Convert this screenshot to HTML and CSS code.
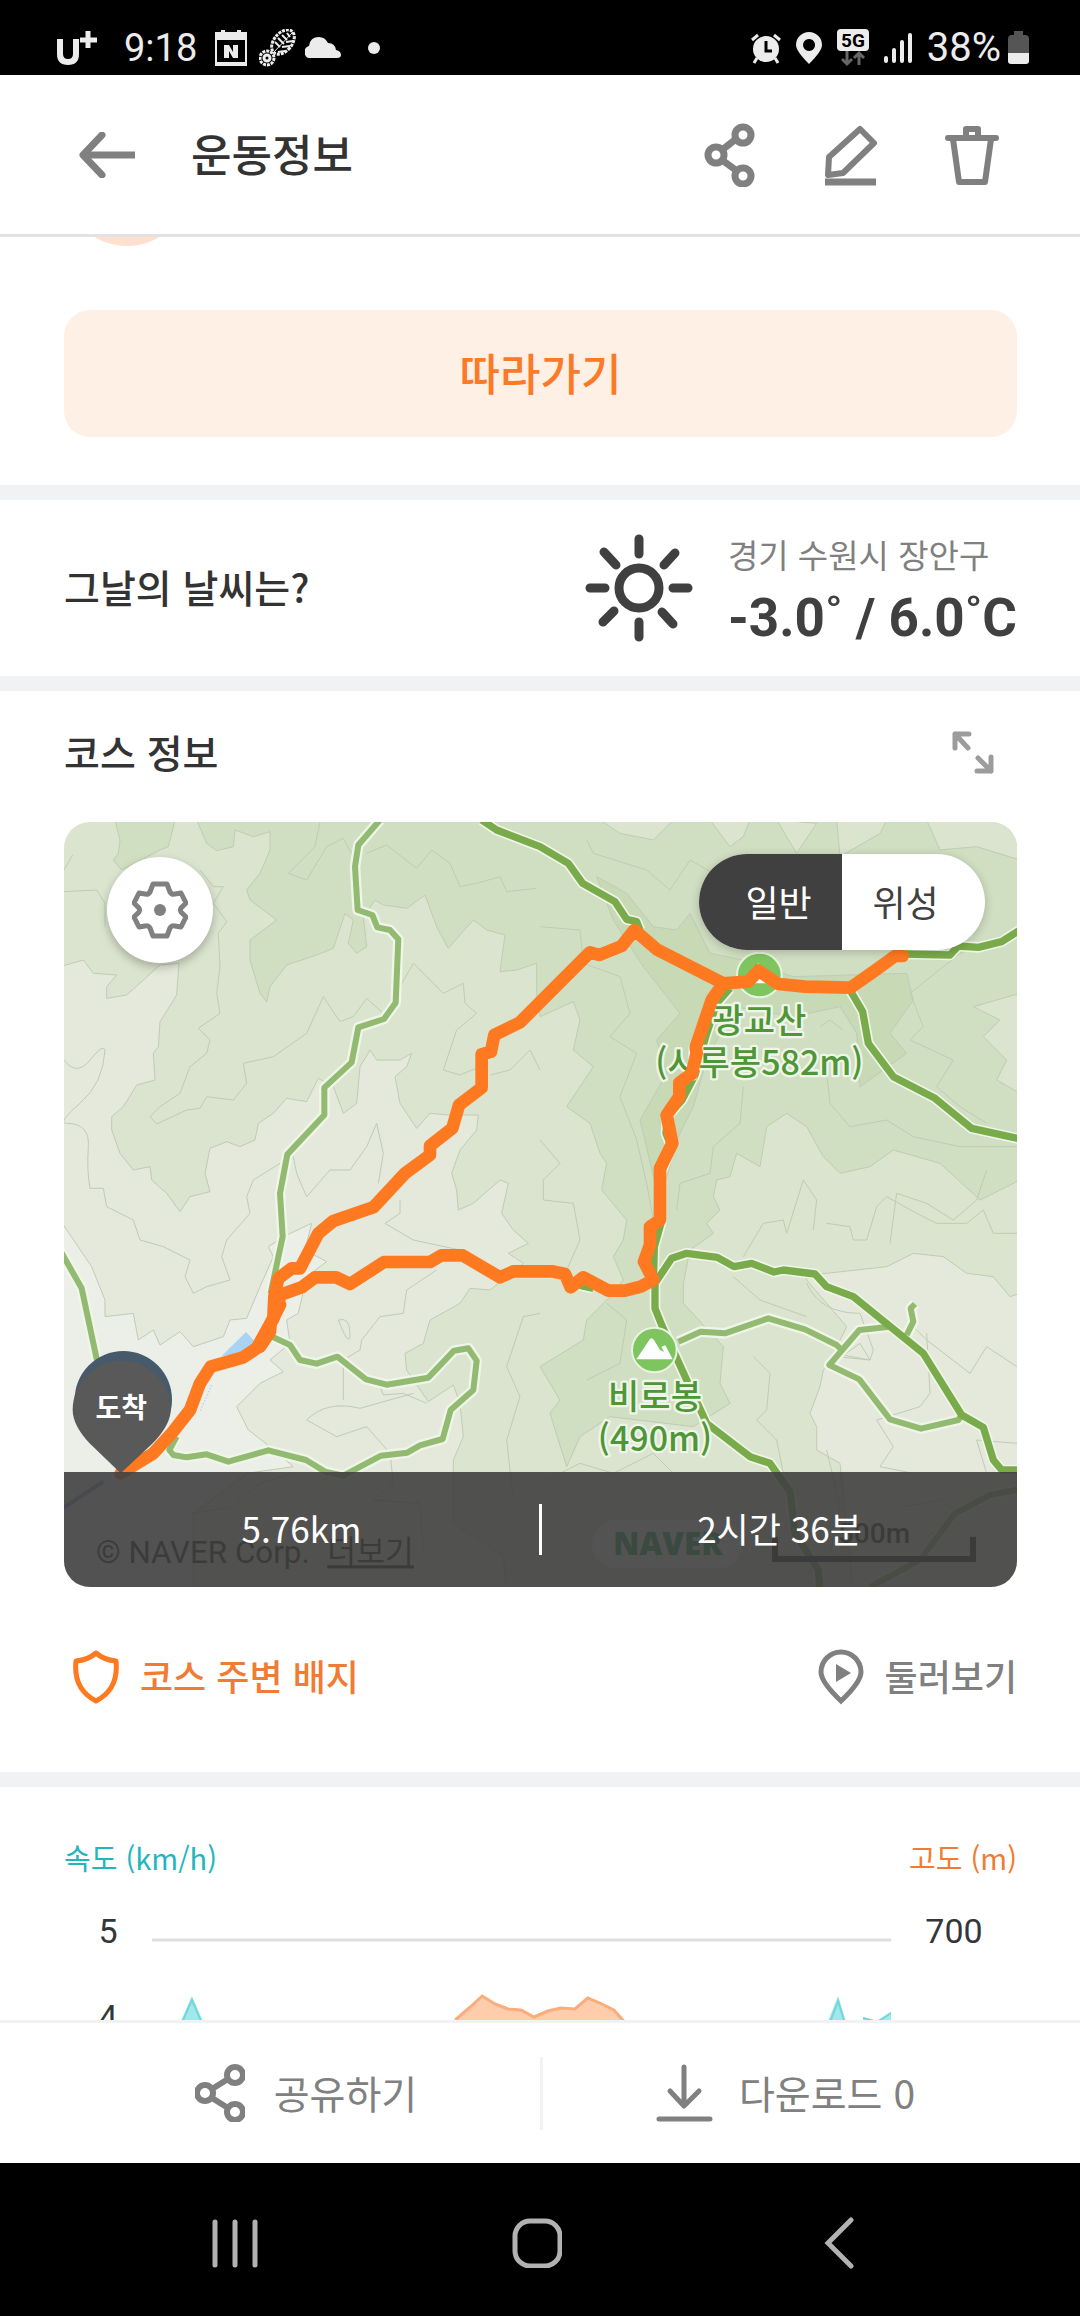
FILE: index.html
```
<!DOCTYPE html>
<html lang="ko">
<head>
  <meta charset="UTF-8" />
  <meta name="viewport" content="width=device-width, initial-scale=1" />
  <title>운동정보</title>
  <link rel="stylesheet" href="styles.css">
</head>
<body>
  <div class="status-bar">
    <div class="status-left">
      <svg width="42" height="34" viewBox="0 0 42 34" fill="none" stroke="#ececec">
        <path d="M4 8v15q0 8 8 8t8-8V8" stroke-width="6"/>
        <path d="M32 0v17M24 9h17" stroke-width="5"/>
      </svg>
      <span class="clock">9:18</span>
      <svg width="32" height="36" viewBox="0 0 32 36">
        <path d="M0 2h6V0h4v2h12V0h4v2h6v34H0zM2 10v22h28V10z" fill="#ececec" fill-rule="evenodd"/>
        <path d="M9 28V15h5l4 7v-7h5v13h-5l-4-7v7z" fill="#ececec"/>
      </svg>
      <svg class="leaf" width="38" height="38" viewBox="0 0 38 38" fill="none" stroke="#ececec">
        <ellipse cx="24" cy="13" rx="9" ry="14" transform="rotate(40 24 13)" stroke-width="3" stroke-dasharray="3 1"/>
        <path d="M14 24L34 3" stroke-width="1"/>
        <path d="M16 13l5 5M19 9l6 6M23 6l5 5M28 4l3 4M19 23l7-1M23 18l8-1M27 13l7-1" stroke-width="2"/>
        <circle cx="8" cy="29" r="7" stroke-width="3" stroke-dasharray="3 1"/>
        <circle cx="8" cy="29" r="3" stroke-width="3"/>
      </svg>
      <svg class="cloud" width="36" height="21" viewBox="0 0 36 21" fill="#ececec">
        <path d="M5 21a5 6 0 0 1-1-12Q5 0 14 0q6 0 9 6 7 0 8 7 5 1 5 5 0 3-4 3z"/>
      </svg>
      <i class="dot"></i>
    </div>
    <div class="status-right">
      <svg width="30" height="32" viewBox="0 0 30 32">
        <path d="M1 8l6-5M29 8l-6-5M6 26l-3 5M24 26l3 5" stroke="#ececec" stroke-width="3"/>
        <circle cx="15" cy="17" r="13" fill="#ececec"/>
        <path d="M15 9v10h6" fill="none" stroke="#000" stroke-width="3"/>
      </svg>
      <svg width="26" height="32" viewBox="0 0 26 32">
        <path d="M13 32Q0 19 0 13a13 13 0 0 1 26 0q0 6-13 19zM13 7a6 6 0 1 0 .1 0z" fill="#ececec" fill-rule="evenodd"/>
      </svg>
      <svg width="32" height="38" viewBox="0 0 32 38">
        <rect width="32" height="22" rx="4" fill="#ececec"/>
        <text class="net" x="16" y="18" text-anchor="middle">5G</text>
        <path d="M10 22v13M5 30l5 5 5-5M22 36V24M17 29l5-5 5 5" fill="none" stroke="#666" stroke-width="3"/>
      </svg>
      <svg width="28" height="30" viewBox="0 0 28 30" stroke="#ececec" stroke-width="4" stroke-linecap="round">
        <path d="M2 25v3M10 17v11M18 9v19M26 2v26"/>
      </svg>
      <span class="battery-text">38%</span>
      <svg width="21" height="34" viewBox="0 0 21 34">
        <path d="M6 0h9v4h2q4 0 4 4v14H0V8q0-4 4-4h2z" fill="#555"/>
        <path d="M0 22h21v8q0 3-3 3H3q-3 0-3-3z" fill="#ececec"/>
      </svg>
    </div>
  </div>

  <header class="header">
    <button type="button" class="icon-btn" aria-label="뒤로">
      <svg width="56" height="46" viewBox="0 0 56 46" fill="none" stroke="#808080" stroke-width="7">
        <path d="M4 23h52"/><path d="M23 3L4 23l19 20" stroke-linecap="round" stroke-linejoin="round"/>
      </svg>
    </button>
    <h1>운동정보</h1>
    <div class="header-actions">
      <button type="button" class="icon-btn" aria-label="공유">
        <svg width="60" height="64" viewBox="0 0 60 64" fill="none" stroke="#808080" stroke-width="7">
          <circle cx="43" cy="12" r="8"/><circle cx="16" cy="32" r="8"/><circle cx="43" cy="53" r="8"/>
          <path d="M22 27l14-11M22 37l15 11"/>
        </svg>
      </button>
      <button type="button" class="icon-btn" aria-label="수정">
        <svg width="60" height="64" viewBox="0 0 60 64" fill="none" stroke="#808080" stroke-width="6" stroke-linejoin="round">
          <path d="M39 6l14 14-31 30-15 2 1-18z"/><path d="M4 59h51" stroke-width="7"/>
        </svg>
      </button>
      <button type="button" class="icon-btn" aria-label="삭제">
        <svg width="60" height="64" viewBox="0 0 60 64" fill="none" stroke="#808080" stroke-width="6" stroke-linejoin="round">
          <path d="M6 15h48" stroke-linecap="round"/><path d="M24 14V6h12v8M11 16l6 43h26l6-43"/>
        </svg>
      </button>
    </div>
  </header>

  <main class="content">
    <section class="follow">
      <div class="avatar-clip"><div class="avatar"></div></div>
      <button type="button" class="follow-btn">따라가기</button>
    </section>

    <section class="weather">
      <h2>그날의 날씨는?</h2>
      <svg width="108" height="108" viewBox="0 0 108 108" fill="none" stroke="#404040" stroke-width="9" stroke-linecap="round">
        <circle cx="54" cy="54" r="20"/>
        <path d="M54 5v15M54 88v15M5 54h15M88 54h15M19 18l12 13M90 19L79 31M18 88l11-11M88 90L77 78"/>
      </svg>
      <div class="weather-info">
        <p class="place">경기 수원시 장안구</p>
        <p class="temp">-3.0˚ / 6.0˚C</p>
      </div>
    </section>

    <section class="course">
      <div class="course-head">
        <h2>코스 정보</h2>
        <button type="button" class="icon-btn" aria-label="지도 크게 보기">
          <svg width="42" height="43" viewBox="0 0 42 43" fill="none" stroke="#9c9c9c" stroke-width="5" stroke-linecap="round" stroke-linejoin="round">
            <path d="M3 17V3h14M3 3l13 14M25 40h14V26M39 40L26 27"/>
          </svg>
        </button>
      </div>

      <div class="map">
        <svg class="map-canvas" viewBox="12 6 2859 2295">
          <!-- terrain -->
          <rect x="12" y="6" width="2859" height="2295" fill="#dae4ce"/>
          <g class="contour">
            <path fill="#e5e9db" d="M0 440L70 420 100 460 170 465 140 500 140 535 200 525 250 480 300 435 357 430 350 525 300 605 295 680 280 700 285 780 230 795 190 860 155 890 155 930 180 1000 220 1050 270 1040 275 1080 320 1120 360 1175 390 1130 450 1115 435 1060 450 985 500 965 540 980 585 960 595 910 640 880 680 835 740 845 775 775 820 800 850 880 890 850 900 740 930 690 950 720 1020 720 1055 700 1040 740 1005 770 1020 850 1070 925 1110 880 1165 885 1255 885 1250 930 1200 990 1175 1060 1190 1110 1195 1170 1240 1150 1320 1080 1345 1090 1325 1180 1360 1230 1405 1270 1345 1300 1390 1330 1290 1410 1230 1405 1200 1450 1110 1500 1090 1570 1035 1600 1040 1650 1105 1745 1180 1695 1200 1750 1210 1850 1180 1920 1180 2110 1260 2160 1330 2210 1340 2310 0 2310z"/>
            <path fill="#ecefe8" d="M0 1200L95 1340 135 1440 135 1490 220 1480 235 1560 280 1530 300 1575 360 1535 400 1580 490 1550 510 1500 560 1495 600 1400 640 1310 625 1280 680 1245 755 1210 735 1290 800 1325 740 1370 715 1480 680 1500 690 1570 630 1620 670 1655 600 1690 530 1760 565 1830 630 1880 700 1940 560 1960 400 2080 400 2310 0 2310z"/>
            <path fill="#d0dec1" d="M165 0L180 60 175 100 160 120 185 150 300 90 325 80 345 0z"/>
            <path fill="#d0dec1" d="M410 0L440 70 470 92 520 80 525 30 580 50 630 35 630 90 600 160 560 210 570 240 650 300 570 360 570 420 600 520 620 545 630 500 680 435 770 405 820 385 855 280 880 300 865 370 890 400 920 380 910 290 945 240 970 255 1040 265 1095 225 1130 320 1165 385 1240 300 1280 330 1335 345 1320 455 1370 450 1430 430 1430 520 1440 590 1540 545 1560 600 1540 690 1600 740 1520 860 1590 910 1620 1000 1640 1030 1625 1110 1700 1200 1690 1260 1660 1310 1690 1380 1650 1430 1580 1500 1570 1560 1440 1640 1500 1740 1470 1780 1520 1940 1560 1850 1650 1790 1900 1820 2010 1750 1980 1690 1990 1580 1870 1450 1870 1390 1890 1290 1960 1240 1940 1210 1980 1170 1960 1130 1970 1080 2010 1070 2030 1000 2100 1040 2120 920 2180 880 2240 920 2290 1010 2340 1060 2430 1040 2500 990 2640 1030 2760 1140 2880 1080 2880 0z"/>
            <path fill="#c8d9b6" d="M1610 170L1700 220 1780 320 1850 330 1890 280 1950 400 2050 420 2200 470 2540 460 2560 540 2490 640 2540 700 2400 800 2390 640 2340 560 2200 590 2020 560 1940 720 1900 860 1850 960 1800 1150 1740 900 1820 760 1790 660 1860 580 1750 440 1660 300z"/>
            <path fill="#e5e9db" d="M2240 1365L2300 1360 2480 1340 2560 1300 2650 1310 2720 1360 2800 1370 2850 1430 2880 1420 2880 2310 2380 2310 2340 1930 2270 1890 2270 1820 2250 1780 2280 1700 2290 1650 2400 1570 2430 1620 2320 1600 2360 1520 2240 1380z"/>
            <path fill="#dae4ce" d="M2880 520L2740 560 2820 600 2770 650 2840 720 2810 780 2880 820zM1620 0L1680 40 1780 60 1840 0zM1950 0L2010 80 2050 50 2070 0zM2150 0L2210 100 2270 10zM2330 0L2340 110 2460 40 2480 0zM2600 0L2640 90 2750 80 2880 120 2880 0z"/>
          </g>
          <g class="contour" fill="none">
            <path d="M12 215L110 210 135 250 135 320M12 150L38 105M420 150L460 200 490 200 460 250 500 305 475 340 480 440 470 520 480 580 415 625 450 660 440 700 390 740 360 820 300 860 270 890 290 912 380 870 420 865 440 830 520 840 560 790 550 730 640 710 740 640 790 530 840 605 880 590 920 535 970 580"/>
            <path d="M780 6L765 80 685 160 740 180 800 80 850 55 880 110M920 100L980 75 1070 145 1115 90 1170 130 1200 200 1250 190 1320 170 1340 215 1430 205M1020 500L1060 430 1150 520 1210 490 1215 550 1250 580 1190 630 1150 750 1200 765 1260 740M1290 765L1350 750 1410 690 1440 750M12 720Q50 770 90 720T135 690Q130 790 60 850T20 910Q90 910 85 980T90 1105L130 1105 140 1160 220 1200 240 1260 310 1280 390 1320 375 1370 400 1420 440 1400 510 1380 485 1310 500 1260 570 1180 560 1130 580 1080 660 1030"/>
            <path d="M700 1010L710 1060 740 1130 810 1050 870 1050 920 980 950 910 970 1000 955 1090M1020 1140L1020 1180 975 1210 1060 1260 1200 1290M850 1740L850 1620 900 1590 905 1560 960 1490 1030 1480 1040 1410 1130 1350M960 1700L970 1725 1030 1720 1100 1750M740 1800Q800 1740 900 1765L1060 1720M740 1800L830 1850 920 1820 990 1900 1000 1990 940 2040 1080 2050 1090 2190M1440 1480L1390 1490 1340 1640 1380 1730 1340 1860 1360 2040M835 1500Q870 1490 870 1540T835 1500M400 2080L520 2060 600 1990 700 1960"/>
            <path d="M1580 60L1600 100 1760 150 1830 210 1890 120 1960 160M1440 320L1560 330 1570 430 1680 470 1710 580 1650 650 1730 700 1680 830 1730 960 1760 1090 1780 1200M1850 1170L1860 1090 1950 1060 1960 980 2040 910 2050 800M2280 620L2310 600 2350 630M2300 760L2310 850 2370 920 2480 900 2560 950 2700 980 2871 980M2871 330L2700 400 2550 520 2590 620 2550 660 2680 720 2630 800 2700 860 2780 910"/>
            <path d="M1440 960L1500 1030 1450 1080 1450 1140 1540 1150 1560 1260 1520 1350 1480 1370M2180 1240L2230 1080 2270 1140 2260 1230M2490 1270L2510 1120 2600 1150 2680 1200 2750 1140 2780 1050M2050 1310L2110 1210 2170 1200 2180 1240M2300 1210L2370 1220 2380 1260 2420 1260 2450 1160 2480 1130 2570 1180 2630 1210 2720 1210 2770 1170 2800 1240 2871 1240M2020 1370L2100 1440 2240 1490M2080 1610L2130 1660 2120 1770 2090 1800 2150 1860 2170 1960M1580 1680L1680 1630 1700 1500 1640 1450M2240 1390Q2280 1480 2400 1480L2440 1590 2430 1620 2330 1610M2600 1540L2610 1720 2580 1760 2450 1800 2500 1880 2460 1940 2560 1960M2560 1520L2600 1560 2730 1660 2780 1580 2871 1640"/>
            <path d="M1440 1990L1560 1930 1660 1960 1780 1900 1840 1960M2300 1890L2340 2060 2310 2200M2530 2060L2640 2040 2700 2080 2600 2150M2780 1960L2750 1860 2871 1870"/>
          </g>
          <path fill="#a9d3f3" d="M485 1608L558 1536 590 1570 560 1600z"/>
          <path d="M455 1695L420 1775" fill="none" stroke="#a9d3f3" stroke-width="4" stroke-dasharray="4 6"/>
          <path d="M12 2062L130 1985" fill="none" stroke="#7fa6cf" stroke-width="12"/>

          <!-- trails -->
          <g class="trail-halo">
            <path id="small-trails" d="M960 0L895 75 885 140 893 270 937 285 952 322 990 330 1015 358 1007 548 972 597 895 622 875 727 793 803 793 885 682 1003 660 1120 668 1250 632 1420M0 1290L65 1405 115 1640M632 1548L690 1575 720 1620 770 1631 832 1610 918 1678 980 1694 1105 1673 1182 1592 1225 1585 1250 1622 1240 1710 1172 1770 1148 1857 1080 1876 1042 1898 963 1907 850 1967 795 1955 738 1920 625 1891 505 1925 440 1903 380 1912 340 1905 328 1890 350 1850M1855 1565L1922 1535 1995 1540 2125 1495 2235 1528 2330 1575 2345 1590M2490 1520L2398 1530 2308 1635 2398 1678 2490 1798 2583 1826 2695 1800 2705 1785M2540 1545L2560 1505 2552 1465 2565 1452M2880 2008L2790 2025 2685 2080 2580 2220 2430 2301"/>
            <path id="main-trails" d="M1265 0L1310 30 1440 80 1525 130 1568 190 1665 245 1700 298 1730 305 1740 330M2530 402L2670 405 2695 378 2755 382 2825 365 2880 330M2370 510L2408 575 2425 670 2500 770 2625 835 2735 925 2880 957M1785 1390L1835 1315 1880 1300 1972 1312 2022 1340 2075 1330 2142 1356 2170 1350 2265 1362 2300 1400 2380 1430 2590 1600 2705 1785 2770 1822 2800 1920 2825 1950 2880 1950M1785 1390L1785 1465 1805 1515 1880 1680 1940 1810 2070 1910 2130 1930 2190 2015 2205 2140 2275 2250 2280 2310M2010 505L1970 550 1937 650 1905 765 1866 840 1822 890 1818 940 1834 980 1803 1060 1803 1210 1783 1280 1780 1390M1560 1396L1600 1405"/>
          </g>
          <use href="#small-trails" class="trail-small"/>
          <use href="#main-trails" class="trail-main"/>

          <!-- peaks -->
          <g class="peak">
            <circle cx="2098" cy="465" r="67"/>
            <path d="M2045 490L2095 430 2150 490z"/>
            <circle cx="1783" cy="1590" r="67"/>
            <path d="M1729 1618L1770 1557Q1776 1552 1782 1560L1800 1590 1812 1596 1804 1580 1816 1576 1838 1618z"/>
          </g>
          <g class="peak-label">
            <text x="2098" y="640">광교산</text>
            <text x="2098" y="766">(시루봉582m)</text>
            <text x="1785" y="1766">비로봉</text>
            <text x="1785" y="1894">(490m)</text>
          </g>

          <!-- walked route -->
          <path class="route" d="M2528 408L2505 408 2450 448 2372 503 2235 500 2155 492 2095 452 2065 485 1990 490 1790 388 1723 330 1685 378 1618 405 1590 397 1440 547 1380 607 1303 645 1293 695 1265 703 1265 803 1197 855 1177 925 1110 977 1110 1005 1035 1060 940 1162 820 1203 775 1240 720 1345 695 1345 655 1375 643 1430 640 1495 590 1585 550 1612 452 1640 420 1690 390 1770 335 1840 280 1900 182 1960"/>
          <path class="route" d="M1990 490L1955 540 1907 682 1910 700 1895 762 1858 788 1858 830 1820 885 1837 970 1800 1045 1800 1200 1770 1220 1770 1275 1752 1325 1780 1380 1742 1400 1695 1412 1645 1412 1570 1372 1532 1402 1515 1362 1475 1354 1360 1354 1320 1372 1208 1306 1145 1306 1110 1326 972 1326 870 1392 828 1372 765 1372 725 1402 660 1425 655 1460 660 1455 632 1510 630 1535 600 1580"/>

          <!-- finish pin -->
          <circle cx="190" cy="1739" r="146" fill="#465a6c"/>
          <path fill="#595959" d="M182 1960L88 1869Q38 1815 38 1769A147 147 0 0 1 332 1769Q332 1815 275 1873z"/>
          <text class="pin-label" x="184" y="1794">도착</text>

          <!-- credits -->
          <text class="credit" x="108" y="2230">© NAVER Corp.</text>
          <text class="credit credit-more" x="802" y="2230">더보기</text>
          <rect x="1596" y="2100" width="450" height="145" rx="70" fill="#fff" opacity=".7"/>
          <text class="naver" x="1660" y="2205">NAVER</text>
          <text class="scale-label" x="2442" y="2170">500m</text>
          <path d="M2145 2150v67h594v-67" fill="none" stroke="#111" stroke-width="18"/>
        </svg>

        <button type="button" class="map-setting" aria-label="지도 설정">
          <svg width="56" height="58" viewBox="0 0 56 58" fill="none" stroke="#808080" stroke-width="5" stroke-linejoin="round">
            <path d="M21 3h14l3 8q2 3 5 2l6-1 5 10-5 5q-1 2 0 4l5 5-5 10-6-1q-3-1-5 2l-3 8H21l-3-8q-2-3-5-2l-6 1-5-10 5-5q1-2 0-4l-5-5 5-10 6 1q3 1 5-2z"/>
            <circle cx="28" cy="29" r="6" fill="#808080" stroke="none"/>
          </svg>
        </button>

        <div class="map-type">
          <input type="radio" name="mapType" id="typeNormal" checked>
          <label for="typeNormal" class="type-normal">일반</label>
          <input type="radio" name="mapType" id="typeSatellite">
          <label for="typeSatellite" class="type-satellite">위성</label>
        </div>

        <div class="map-summary">
          <span>5.76km</span>
          <i class="divider"></i>
          <span>2시간 36분</span>
        </div>
      </div>

      <div class="course-links">
        <button type="button" class="link-btn badge">
          <svg width="46" height="54" viewBox="0 0 46 54" fill="none" stroke="#ff7920" stroke-width="5" stroke-linejoin="round">
            <path d="M23 3q8 7 20 8 3 28-20 40Q0 39 3 11 15 10 23 3z"/>
          </svg>
          <span>코스 주변 배지</span>
        </button>
        <button type="button" class="link-btn look">
          <svg width="46" height="56" viewBox="0 0 46 56">
            <path d="M23 52Q3 33 3 23a20 20 0 0 1 40 0q0 10-20 29z" fill="none" stroke="#808080" stroke-width="5"/>
            <path d="M18 15l15 9-15 9z" fill="#808080"/>
          </svg>
          <span>둘러보기</span>
        </button>
      </div>
    </section>

    <section class="chart">
      <div class="chart-head">
        <span class="speed">속도 (km/h)</span>
        <span class="height">고도 (m)</span>
      </div>
      <div class="chart-body">
        <div class="axis"><span>5</span><span>4</span></div>
        <svg class="plot" viewBox="0 0 741 130" preserveAspectRatio="none">
          <path d="M0 2h741" stroke="#dedede" stroke-width="3"/>
          <path d="M19 106L40 58 61 106z" fill="#a0e8ea"/>
          <path d="M19 110L40 62 61 110" fill="none" stroke="#74d6da" stroke-width="2"/>
          <path d="M667 110L688 58 704 110M711 130L713 79 727 83 741 74V130z" fill="#a0e8ea"/>
          <path d="M670 110L688 63 702 110M713 80L727 84 741 75" fill="none" stroke="#74d6da" stroke-width="2"/>
          <path d="M260 130L304 81 318 70 331 58 344 66 357 71 370 72 383 79 397 73 410 70 424 71 437 60 449 65 463 72 473 83 510 130z" fill="#ffcdac"/>
          <path d="M304 82L318 70 331 58 344 66 357 71 370 72 383 79 397 73 410 70 424 71 437 60 449 65 463 72 473 83" fill="none" stroke="#faad7b" stroke-width="3"/>
        </svg>
        <div class="axis"><span>700</span></div>
      </div>
    </section>
  </main>

  <footer class="bottom-bar">
    <button type="button" class="bottom-btn share">
      <svg width="50" height="58" viewBox="0 0 50 58" fill="none" stroke="#808080" stroke-width="6">
        <circle cx="40" cy="11" r="8"/><circle cx="10" cy="29" r="8"/><circle cx="40" cy="48" r="8"/>
        <path d="M17 25l16-10M17 34l16 10"/>
      </svg>
      <span>공유하기</span>
    </button>
    <button type="button" class="bottom-btn download">
      <svg width="57" height="58" viewBox="0 0 57 58" fill="none" stroke="#808080" stroke-width="5" stroke-linecap="round" stroke-linejoin="round">
        <path d="M28 3v38M14 27l14 15 15-15M3 55h51"/>
      </svg>
      <span>다운로드 0</span>
    </button>
  </footer>

  <nav class="nav-bar">
    <button type="button" class="icon-btn" aria-label="최근 앱">
      <svg width="46" height="50" viewBox="0 0 46 50" stroke="#b2b2b2" stroke-width="5" stroke-linecap="round">
        <path d="M3 4v43M23 4v43M43 4v43"/>
      </svg>
    </button>
    <button type="button" class="icon-btn" aria-label="홈">
      <svg width="50" height="50" viewBox="0 0 50 50" fill="none" stroke="#b2b2b2" stroke-width="5">
        <rect x="3" y="3" width="45" height="45" rx="15"/>
      </svg>
    </button>
    <button type="button" class="icon-btn" aria-label="뒤로">
      <svg width="30" height="52" viewBox="0 0 30 52" fill="none" stroke="#b2b2b2" stroke-width="5" stroke-linecap="round">
        <path d="M27 3L4 26l23 23"/>
      </svg>
    </button>
  </nav>
</body>
</html>
```
FILE: styles.css
```
* {
  box-sizing: border-box;
}

body {
  display: flex;
  flex-direction: column;
  height: 100vh;
  margin: 0;
  background-color: #fff;
  color: #333;
  font-family: "Noto Sans CJK KR", "Noto Sans", sans-serif;
}

h1, h2, p {
  margin: 0;
}

h1, h2 {
  padding-bottom: 4px;
  font-weight: 500;
}

button {
  padding: 0;
  border: none;
  background: none;
  color: inherit;
  font-family: inherit;
  cursor: pointer;
}

svg {
  display: block;
  flex-shrink: 0;
}

.icon-btn {
  display: flex;
  align-items: center;
  justify-content: center;
}

/* status bar */
.status-bar {
  display: flex;
  justify-content: space-between;
  height: 75px;
  padding: 20px 51px 0 56px;
  background-color: #000;
  color: #ececec;
  font-family: Roboto, sans-serif;
  font-size: 38px;
  line-height: 56px;
}

.status-left, .status-right {
  display: flex;
  align-items: center;
}

.clock {
  margin: 0 18px 0 26px;
}

.leaf {
  margin-left: 12px;
}

.cloud {
  margin-left: 8px;
}

.dot {
  width: 12px;
  height: 12px;
  margin-left: 27px;
  border-radius: 50%;
  background-color: #ececec;
}

.status-right {
  gap: 15px;
}

.status-right svg:last-child {
  margin-left: -8px;
}

.battery-text {
  font-size: 40px;
}

.net {
  font-size: 19px;
  font-weight: 700;
}

/* header */
.header {
  display: flex;
  align-items: center;
  height: 162px;
  flex-shrink: 0;
  padding: 0 78px 0 79px;
  border-bottom: 3px solid #e2e2e2;
}

.header h1 {
  margin-left: 56px;
  font-size: 44px;
}

.header-actions {
  display: flex;
  gap: 61px;
  margin-left: auto;
}

/* page content */
.content {
  flex: 1;
  min-height: 0;
  overflow-y: auto;
  scrollbar-width: none;
}

.content h2 {
  font-size: 39px;
}

.follow {
  padding: 0 63px 48px 64px;
}

.avatar-clip {
  display: flex;
  align-items: flex-end;
  height: 9px;
  margin-bottom: 64px;
  overflow: hidden;
}

.avatar {
  width: 126px;
  height: 126px;
  flex-shrink: 0;
  border-radius: 50%;
  background-color: #ffe0cf;
}

.follow-btn {
  width: 100%;
  height: 127px;
  padding-bottom: 4px;
  border-radius: 26px;
  background-color: #fff0e6;
  color: #fa7a28;
  font-size: 44px;
  font-weight: 500;
}

.weather, .course, .chart {
  border-top: 15px solid #f1f2f4;
  padding: 0 63px 0 64px;
}

.weather {
  display: flex;
  align-items: center;
  height: 191px;
}

.weather svg {
  margin-left: auto;
}

.weather-info {
  margin-left: 35px;
}

.place {
  padding-bottom: 4px;
  color: #808080;
  font-size: 33px;
  line-height: 56px;
}

.temp {
  color: #404040;
  font-family: Roboto, sans-serif;
  font-size: 53px;
  font-weight: 700;
  line-height: 64px;
}

.course-head {
  display: flex;
  align-items: center;
  justify-content: space-between;
  height: 131px;
  padding: 0 23px 8px 0;
}

/* map */
.map {
  position: relative;
  border-radius: 26px;
  overflow: hidden;
}

.map-canvas {
  width: 100%;
  height: auto;
}

.contour {
  stroke: #bfccb4;
  stroke-width: 3;
  stroke-linejoin: round;
}

.trail-halo, .trail-small, .trail-main, .route {
  fill: none;
  stroke-linejoin: round;
}

.trail-halo {
  stroke: #eff5e8;
  stroke-width: 32;
}

.trail-small {
  stroke: #92ba70;
  stroke-width: 18;
}

.trail-main {
  stroke: #7aab4b;
  stroke-width: 22;
}

.route {
  stroke: #ff7920;
  stroke-width: 38;
  stroke-linecap: round;
}

.peak circle {
  fill: #7fc55f;
  stroke: #e8f3e0;
  stroke-width: 6;
}

.peak path {
  fill: #fff;
}

.peak-label {
  fill: #4e9638;
  stroke: #eff5e8;
  stroke-width: 14;
  stroke-linejoin: round;
  paint-order: stroke;
  font-size: 102px;
  font-weight: 500;
  text-anchor: middle;
}

.pin-label {
  fill: #fff;
  font-size: 84px;
  font-weight: 700;
  text-anchor: middle;
}

.credit {
  fill: #111;
  font-family: Roboto, "Noto Sans CJK KR", sans-serif;
  font-size: 94px;
}

.credit-more {
  text-decoration: underline;
}

.naver {
  fill: #00a04a;
  font-family: "Open Sans", sans-serif;
  font-size: 94px;
  font-weight: 800;
}

.scale-label {
  fill: #111;
  font-family: Roboto, sans-serif;
  font-size: 84px;
  font-weight: 500;
  text-anchor: middle;
}

.map-setting {
  position: absolute;
  top: 35px;
  left: 43px;
  display: flex;
  align-items: center;
  justify-content: center;
  width: 106px;
  height: 106px;
  border-radius: 50%;
  background-color: #fff;
  box-shadow: 0 4px 10px rgba(0,0,0,0.25);
}

.map-type {
  position: absolute;
  top: 32px;
  right: 32px;
  display: flex;
  width: 286px;
  height: 96px;
  border-radius: 48px;
  background-color: #fff;
  box-shadow: 0 2px 10px rgba(0,0,0,0.2);
  overflow: hidden;
}

.map-type input {
  position: absolute;
  opacity: 0;
}

.map-type label {
  flex: 1;
  color: #404040;
  font-size: 36px;
  line-height: 94px;
  text-align: center;
}

.map-type input:checked + label {
  background-color: #404040;
  color: #fff;
}

.type-normal {
  padding-left: 16px;
}

.type-satellite {
  padding-right: 16px;
}

.map-summary {
  position: absolute;
  right: 0;
  bottom: 0;
  left: 0;
  display: flex;
  align-items: center;
  height: 115px;
  background-color: rgba(64,64,64,0.9);
  color: #fff;
  font-size: 35px;
  line-height: 50px;
}

.map-summary span {
  flex: 1;
  padding-bottom: 4px;
  text-align: center;
}

.divider {
  width: 3px;
  height: 51px;
  background-color: #fff;
}

.course-links {
  display: flex;
  align-items: center;
  justify-content: space-between;
  height: 185px;
  padding: 0 0 6px 9px;
}

.link-btn {
  display: flex;
  align-items: center;
  gap: 21px;
  font-size: 36px;
  font-weight: 500;
}

.link-btn span, .bottom-btn span {
  padding-bottom: 3px;
}

.badge {
  color: #f07c34;
}

.look {
  color: #808080;
}

/* chart */
.chart-head {
  display: flex;
  justify-content: space-between;
  padding-top: 48px;
  font-size: 29px;
  line-height: 44px;
}

.speed {
  color: #1fb6be;
}

.height {
  color: #f07c34;
}

.chart-body {
  display: grid;
  grid-template-columns: 88px 1fr 126px;
  margin-top: 30px;
}

.axis {
  display: flex;
  flex-direction: column;
  gap: 42px;
  color: #333739;
  font-family: Roboto, sans-serif;
  font-size: 34px;
  line-height: 44px;
  text-align: center;
}

.plot {
  width: 100%;
  height: 130px;
  margin-top: 29px;
}

/* bottom */
.bottom-bar {
  display: grid;
  grid-template-columns: 1fr 1fr;
  align-items: center;
  height: 143px;
  flex-shrink: 0;
  border-top: 3px solid #f1f2f4;
}

.bottom-btn {
  display: flex;
  align-items: center;
  justify-content: center;
  height: 73px;
  color: #808080;
  font-size: 39px;
}

.share {
  gap: 29px;
  padding-left: 72px;
}

.download {
  gap: 26px;
  padding-right: 52px;
  border-left: 3px solid #f1f2f4;
}

.nav-bar {
  display: grid;
  grid-template-columns: repeat(3, 1fr);
  height: 153px;
  flex-shrink: 0;
  padding: 8px 90px 0 84px;
  background-color: #000;
}

.nav-bar .icon-btn {
  height: 144px;
}
```
